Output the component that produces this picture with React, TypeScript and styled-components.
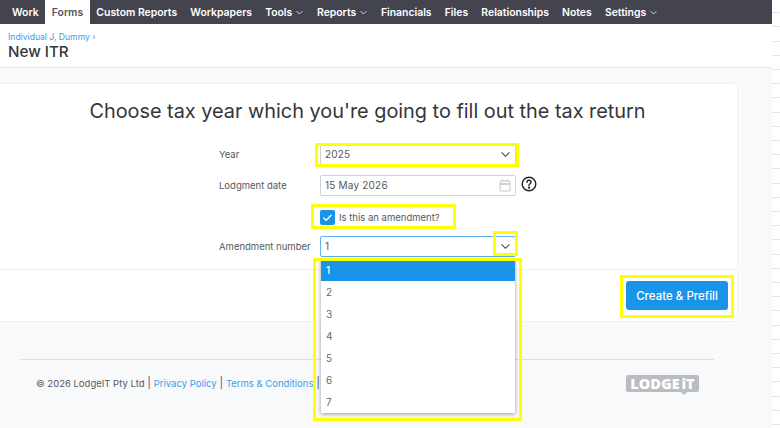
import React from "react";
import styled, { createGlobalStyle } from "styled-components";

const Global = createGlobalStyle`
  html, body { margin: 0; padding: 0; background: #fff; }
  body { font-family: Inter, "Liberation Sans", sans-serif; }
  * { box-sizing: border-box; }
`;

const Screen = styled.div`
  position: relative;
  width: 780px;
  height: 428px;
  overflow: hidden;
  display: flex;
  background: #fff;
`;

const Page = styled.div`
  width: 772px;
  height: 428px;
  flex: none;
  display: flex;
  flex-direction: column;
  background: #f8f9fb;
`;

const Gutter = styled.div`
  flex: 1;
  background: repeating-linear-gradient(to bottom, #fff 0, #fff 13.2px, #e2e4e6 13.2px, #e2e4e6 14.2px);
  background-position: 0 -1px;
`;

const Nav = styled.nav`
  height: 24px;
  flex: none;
  display: flex;
  background: #44444f;
  padding-left: 5.4px;
`;

const NavItem = styled.a<{ $active?: boolean }>`
  height: 24px;
  display: flex;
  align-items: center;
  gap: 2.5px;
  padding: 0 6.6px;
  font-size: 10.4px;
  font-weight: 600;
  color: ${(p) => (p.$active ? "#55585f" : "#fff")};
  background: ${(p) => (p.$active ? "#fff" : "transparent")};
`;

const Head = styled.header`
  height: 44px;
  flex: none;
  background: #fff;
  border-bottom: 1px solid #e6e7ea;
  padding: 8px 8px 0;
`;

const Crumb = styled.div`
  font-size: 8.6px;
  line-height: 11px;
  color: #8a8f96;
  span { color: #3e9be8; }
`;

const PageTitle = styled.h1`
  margin: -1px 0 0;
  font-size: 15.2px;
  line-height: 19px;
  font-weight: 500;
  color: #33363b;
`;

const Card = styled.section`
  margin-top: 15px;
  width: 738px;
  height: 239px;
  flex: none;
  background: #fff;
  border: 1px solid #eef0f2;
  border-left: 0;
  border-radius: 0 5px 5px 0;
  display: flex;
  flex-direction: column;
`;

const CardBody = styled.div`
  height: 186px;
  flex: none;
  padding-top: 14px;
  border-bottom: 1px solid #ecedf0;
`;

const Heading = styled.h2`
  margin: 0 0 20px;
  padding-right: 2px;
  text-align: center;
  font-size: 19.87px;
  line-height: 26px;
  font-weight: 400;
  color: #33363b;
`;

const Form = styled.div`
  display: grid;
  grid-template-columns: 101px 196px;
  margin-left: 219px;
  row-gap: 10px;
  align-items: center;
`;

const Label = styled.label`
  font-size: 9.5px;
  color: #55585f;
`;

const Field = styled.div<{ $focus?: boolean }>`
  position: relative;
  height: 21px;
  display: flex;
  align-items: center;
  justify-content: space-between;
  padding: 0 4px 1px;
  background: #fff;
  border: 1px solid ${(p) => (p.$focus ? "#62b0ee" : "#cfd2d6")};
  border-radius: 2px;
  font-size: 10px;
  letter-spacing: 0.2px;
  color: #55585f;
`;

const CheckRow = styled.div`
  grid-column: 2;
  position: relative;
  height: 16px;
  margin: 3px 0 1px;
  display: flex;
  align-items: center;
  gap: 4px;
  font-size: 9.5px;
  color: #55585f;
`;

const Check = styled.span`
  width: 15px;
  height: 15px;
  border-radius: 2px;
  background: #1a94e8;
  display: flex;
  align-items: center;
  justify-content: center;
`;

const Help = styled.svg`
  position: absolute;
  left: 200px;
  top: 0;
`;

const Highlight = styled.div<{ $t: number; $r: number; $b: number; $l: number }>`
  position: absolute;
  top: ${(p) => p.$t}px;
  right: ${(p) => p.$r}px;
  bottom: ${(p) => p.$b}px;
  left: ${(p) => p.$l}px;
  border: 3px solid #ffff00;
  pointer-events: none;
  z-index: 3;
`;

const Menu = styled.ul`
  position: absolute;
  left: 0;
  top: 22px;
  width: 194px;
  margin: 0;
  padding: 0;
  list-style: none;
  background: #fff;
  box-shadow: 0 1px 4px rgba(0, 0, 0, 0.4);
  z-index: 2;
`;

const Option = styled.li<{ $active?: boolean }>`
  height: 22px;
  display: flex;
  align-items: center;
  padding-left: 5px;
  font-size: 10px;
  font-weight: ${(p) => (p.$active ? 500 : 400)};
  color: ${(p) => (p.$active ? "#fff" : "#666a70")};
  background: ${(p) => (p.$active ? "#1a94e8" : "#fff")};
`;

const CardFoot = styled.div`
  flex: 1;
  display: flex;
  justify-content: flex-end;
  align-items: flex-start;
  padding: 11px 9px 0 0;
`;

const CreateButton = styled.button`
  position: relative;
  width: 102px;
  height: 29px;
  padding: 0;
  border: 0;
  border-radius: 3px;
  background: #1a94e8;
  color: #fff;
  font-family: inherit;
  font-size: 11.5px;
  font-weight: 500;
`;

const Footer = styled.footer`
  margin: 37px 58px 0 21px;
  height: 46px;
  border-top: 1px solid #dcdee1;
  display: flex;
  align-items: center;
  justify-content: space-between;
  padding: 0 15px;
`;

const FootText = styled.div`
  font-size: 9.5px;
  color: #55585f;
  white-space: nowrap;
  a { color: #3e9be8; }
  i { font-style: normal; font-size: 11px; margin: 0 2.8px; }
`;

const Logo = styled.div`
  position: relative;
  width: 73px;
  height: 17px;
  margin-top: 2px;
  background: #b9bdc1;
  border-radius: 2px;
  color: #fff;
  font-family: "Open Sans", sans-serif;
  font-weight: 800;
  font-size: 14.5px;
  line-height: 17px;
  word-spacing: -2px;
  text-align: center;
  &::after {
    content: "";
    position: absolute;
    left: 75%;
    bottom: -3px;
    border: 3px solid transparent;
    border-bottom: 0;
    border-top-color: #b9bdc1;
  }
`;

const Chevron = () => (
  <svg width="11" height="11" viewBox="0 0 24 24" fill="none" stroke="#44474c" strokeWidth="2.2" strokeLinecap="round" strokeLinejoin="round">
    <path d="M4 8l8 8 8-8" />
  </svg>
);

const NavChevron = () => (
  <svg width="9" height="9" viewBox="0 0 24 24" fill="none" stroke="#fff" strokeWidth="2" strokeLinecap="round" strokeLinejoin="round">
    <path d="M5 9l7 7 7-7" />
  </svg>
);

const Calendar = () => (
  <svg width="12" height="13" viewBox="0 0 12 13" fill="none" stroke="#c3c6ca" strokeWidth="1">
    <rect x="1" y="2" width="10" height="10" rx="1" />
    <path d="M1 5h10" strokeWidth="1.6" />
    <path d="M3.5 0.5v2M8.5 0.5v2" />
  </svg>
);

const items: [string, boolean?][] = [
  ["Work"], ["Forms"], ["Custom Reports"], ["Workpapers"], ["Tools", true], ["Reports", true],
  ["Financials"], ["Files"], ["Relationships"], ["Notes"], ["Settings", true],
];

export default function App() {
  return (
    <Screen>
      <Global />
      <Page>
        <Nav>
          {items.map(([name, caret]) => (
            <NavItem key={name} $active={name === "Forms"}>
              {name}
              {caret && <NavChevron />}
            </NavItem>
          ))}
        </Nav>
        <Head>
          <Crumb><span>Individual J, Dummy</span> ›</Crumb>
          <PageTitle>New ITR</PageTitle>
        </Head>
        <Card>
          <CardBody>
            <Heading>Choose tax year which you're going to fill out the tax return</Heading>
            <Form>
              <Label>Year</Label>
              <Field>
                2025
                <Chevron />
                <Highlight $t={-2} $r={-4} $b={-3} $l={-6} />
              </Field>
              <Label>Lodgment date</Label>
              <Field>
                15 May 2026
                <Calendar />
                <Help width="16" height="16" viewBox="0 0 16 16" fill="none" stroke="#222" strokeWidth="1.4">
                  <circle cx="8" cy="8" r="6.8" />
                  <path d="M6 6.2c0-2.6 4-2.6 4 0 0 1.6-2 1.6-2 3.2" strokeLinecap="round" />
                  <circle cx="8" cy="11.6" r="0.5" fill="#222" />
                </Help>
              </Field>
              <CheckRow>
                <Check>
                  <svg width="11" height="11" viewBox="0 0 24 24" fill="none" stroke="#fff" strokeWidth="3" strokeLinecap="round" strokeLinejoin="round">
                    <path d="M4 13l5 5L20 7" />
                  </svg>
                </Check>
                Is this an amendment?
                <Highlight $t={-5} $r={60} $b={-4} $l={-9} />
              </CheckRow>
              <Label>Amendment number</Label>
              <Field $focus>
                1
                <Chevron />
                <Highlight $t={-6} $r={-3} $b={0} $l={172} />
                <Highlight $t={21} $r={-7} $b={-165} $l={-8} />
                <Menu>
                  {["1", "2", "3", "4", "5", "6", "7"].map((n) => (
                    <Option key={n} $active={n === "1"}>{n}</Option>
                  ))}
                </Menu>
              </Field>
            </Form>
          </CardBody>
          <CardFoot>
            <CreateButton>
              Create &amp; Prefill
              <Highlight $t={-6} $r={-6} $b={-8} $l={-6} />
            </CreateButton>
          </CardFoot>
        </Card>
        <Footer>
          <FootText>
            © 2026 LodgeIT Pty Ltd<i>|</i><a>Privacy Policy</a><i>|</i><a>Terms &amp; Conditions</a><i>|</i>
          </FootText>
          <Logo>LODGE iT</Logo>
        </Footer>
      </Page>
      <Gutter />
    </Screen>
  );
}
